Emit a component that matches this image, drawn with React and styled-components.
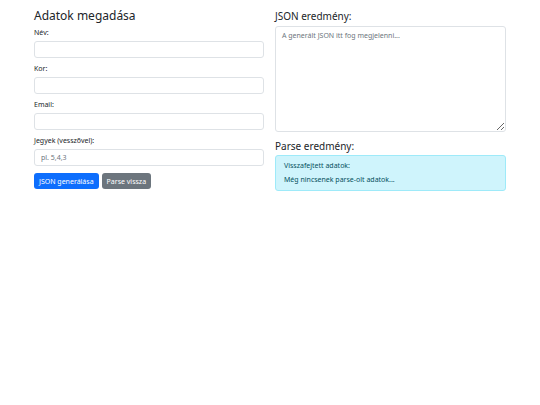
import React from 'react';
import styled, { createGlobalStyle } from 'styled-components';

const GlobalStyle = createGlobalStyle`
  body {
    margin: 0;
    background: #fff;
    font-family: "Noto Sans", "Open Sans", sans-serif;
    color: #212529;
  }
`;

const Page = styled.div`
  display: grid;
  grid-template-columns: 230px 231px;
  column-gap: 11px;
  padding: 8px 0 0 34px;
`;

const Column = styled.div`
  display: flex;
  flex-direction: column;
`;

const Title = styled.h3`
  font-size: ${(p) => (p.small ? '10px' : '12px')};
  font-weight: 400;
  line-height: ${(p) => (p.small ? '14px' : '16px')};
  margin: ${(p) => (p.top || 0)}px 0 ${(p) => (p.bottom || 4)}px;
`;

const Group = styled.div`
  display: flex;
  flex-direction: column;
  margin-bottom: 6px;
`;

const Label = styled.label`
  font-size: 7px;
  line-height: 10px;
  margin-bottom: 3px;
`;

const Input = styled.input`
  box-sizing: border-box;
  height: 17px;
  width: 100%;
  border: 1px solid #dee2e6;
  border-radius: 3px;
  padding: 0 6px;
  font: inherit;
  font-size: 7px;
  color: #212529;
  outline: none;
  &::placeholder {
    color: #6c757d;
  }
`;

const Buttons = styled.div`
  display: flex;
  gap: 3px;
  margin-top: 1px;
`;

const Button = styled.button`
  height: 16px;
  padding: 0 5px;
  border: none;
  border-radius: 3px;
  font: inherit;
  font-size: 7px;
  color: #fff;
  background: ${(p) => (p.secondary ? '#6c757d' : '#0d6efd')};
`;

const Area = styled.textarea`
  box-sizing: border-box;
  width: 100%;
  height: 106px;
  border: 1px solid #dee2e6;
  border-radius: 3px;
  padding: 4px 6px;
  font: inherit;
  font-size: 7px;
  line-height: 1.5;
  resize: vertical;
  outline: none;
  &::placeholder {
    color: #6c757d;
  }
`;

const Alert = styled.div`
  box-sizing: border-box;
  height: 36px;
  border: 1px solid #9eeaf9;
  border-radius: 3px;
  background: #cff4fc;
  color: #055160;
  font-size: 7px;
  line-height: 10px;
  padding: 5px 8px;
  display: flex;
  flex-direction: column;
  gap: 4px;
`;

export default function App() {
  return (
    <>
      <GlobalStyle />
      <Page>
        <Column>
          <Title bottom={4}>Adatok megadása</Title>
          <Group>
            <Label>Név:</Label>
            <Input type="text" />
          </Group>
          <Group>
            <Label>Kor:</Label>
            <Input type="text" />
          </Group>
          <Group>
            <Label>Email:</Label>
            <Input type="text" />
          </Group>
          <Group>
            <Label>Jegyek (vesszővel):</Label>
            <Input type="text" placeholder="pl. 5,4,3" />
          </Group>
          <Buttons>
            <Button>JSON generálása</Button>
            <Button secondary>Parse vissza</Button>
          </Buttons>
        </Column>
        <Column>
          <Title small top={1} bottom={3}>JSON eredmény:</Title>
          <Area placeholder="A generált JSON itt fog megjelenni..." />
          <Title small top={7} bottom={2}>Parse eredmény:</Title>
          <Alert>
            <div>Visszafejtett adatok:</div>
            <div>Még nincsenek parse-olt adatok...</div>
          </Alert>
        </Column>
      </Page>
    </>
  );
}
